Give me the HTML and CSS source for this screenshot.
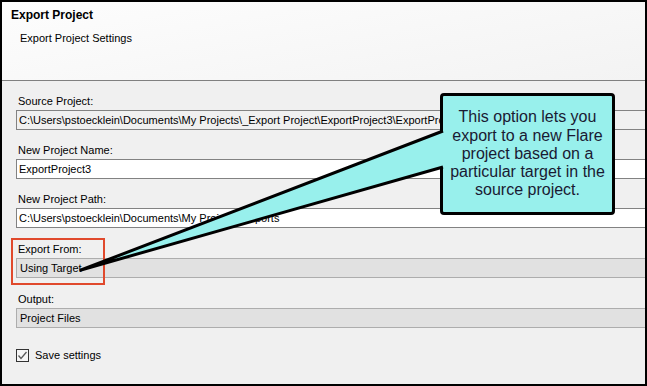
FILE: index.html
```html
<!DOCTYPE html>
<html>
<head>
<meta charset="utf-8" />
<title>Export Project</title>
<link rel="stylesheet" href="styles.css">
</head>
<body>
<div class="window">
	<div class="header">
		<div class="title">Export Project</div>
		<div class="subtitle">Export Project Settings</div>
	</div>
	<div class="form">
		<div class="group">
			<div class="label">Source Project:</div>
			<div class="field readonly">C:\Users\pstoecklein\Documents\My Projects\_Export Project\ExportProject3\ExportProject3.flprj</div>
		</div>
		<div class="group">
			<div class="label">New Project Name:</div>
			<div class="field">ExportProject3</div>
		</div>
		<div class="group">
			<div class="label">New Project Path:</div>
			<div class="field">C:\Users\pstoecklein\Documents\My Projects\Exports</div>
		</div>
		<div class="group">
			<div class="label">Export From:</div>
			<div class="field combo">Using Target</div>
		</div>
		<div class="group">
			<div class="label">Output:</div>
			<div class="field combo">Project Files</div>
		</div>
		<div class="check">
			<span class="box">
				<svg width="11" height="11" viewBox="0 0 11 11"><polyline points="1.5,5.5 4,8.5 9.5,2" fill="none" stroke="#5a5a5a" stroke-width="1.3"/></svg>
			</span>
			<span>Save settings</span>
		</div>
	</div>

	<div class="highlight"></div>
	<div class="callout">
		<div class="callout-text">This option lets you export to a new Flare project based on a particular target in the source project.</div>
	</div>
	<svg class="tail" width="647" height="386" viewBox="0 0 647 386">
		<path d="M443,131 L81,270 L443,167" fill="#98f0ec" stroke="#000" stroke-width="3" stroke-linejoin="round"/>
	</svg>
</div>
</body>
</html>
```

FILE: styles.css
```css
*{
	box-sizing: border-box;
}

body{
	margin: 0;
	font-family: "Liberation Sans", Arial, sans-serif;
	font-size: 11px;
	color: #000;
}

.window{
	position: relative;
	width: 647px;
	height: 386px;
	border: 2px solid #000;
	background-color: #f0f0f0;
	overflow: hidden;
}

.header{
	height: 79px;
	padding: 5px 0 0 9px;
	background: linear-gradient(170deg, #fdfdfd, #f3f3f3);
	border-bottom: 1px solid #808080;
}

.title{
	font-size: 12px;
	font-weight: bold;
	line-height: 16px;
}

.subtitle{
	margin: 7px 0 0 9px;
	line-height: 16px;
}

.form{
	padding: 13px 0 0 14px;
}

.group{
	margin-bottom: 13px;
}

.group:nth-child(n+3){
	margin-bottom: 14px;
}

.label{
	padding-left: 2px;
	line-height: 14px;
	margin-bottom: 2px;
}

.field{
	height: 20px;
	line-height: 18px;
	padding-left: 2px;
	border: 1px solid #828282;
	border-right: none;
	background-color: #fff;
	white-space: nowrap;
	overflow: hidden;
}

.readonly{
	background-color: #f0f0f0;
}

.combo{
	padding-left: 3px;
	background-color: #e1e1e1;
	border-color: #adadad;
}

.check{
	display: flex;
	align-items: center;
	gap: 6px;
	margin-top: 20px;
	line-height: 14px;
}

.box{
	display: flex;
	align-items: center;
	justify-content: center;
	width: 13px;
	height: 13px;
	border: 1px solid #333;
	background-color: #f6f6f6;
}

.highlight{
	position: absolute;
	left: 9px;
	top: 236px;
	width: 94px;
	height: 47px;
	border: 2px solid #e0492c;
}

.callout{
	position: absolute;
	left: 438px;
	top: 91px;
	width: 175px;
	height: 122px;
	border: 3px solid #000;
	border-radius: 4px;
	background-color: #98f0ec;
	display: flex;
	align-items: center;
	justify-content: center;
	padding: 0 6px;
}

.callout-text{
	font-size: 16px;
	line-height: 18.3px;
	text-align: center;
	color: #1a1a33;
}

.tail{
	position: absolute;
	left: -2px;
	top: -2px;
}
```
